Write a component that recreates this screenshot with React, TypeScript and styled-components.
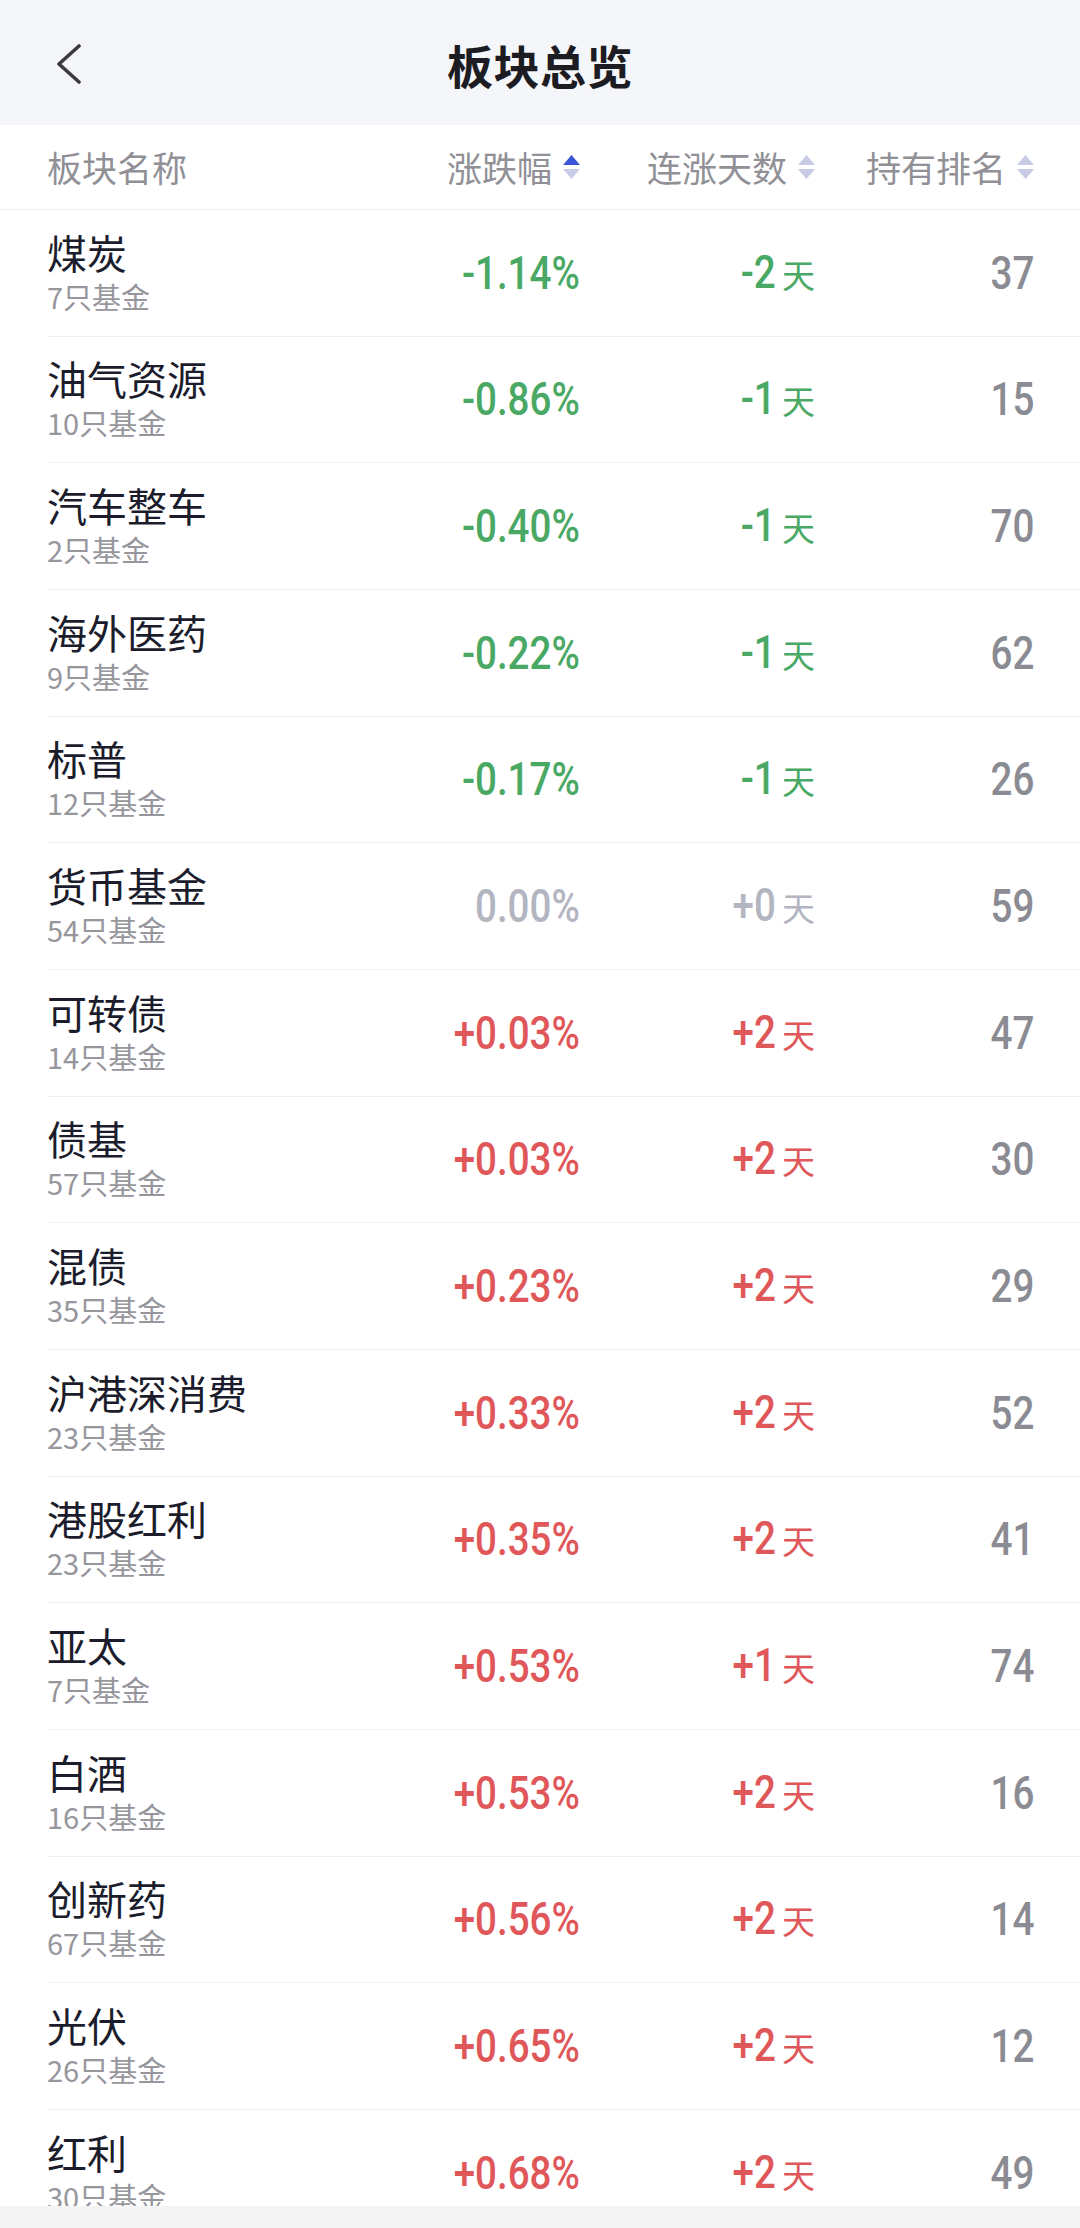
import styled, { createGlobalStyle } from 'styled-components';

type Trend = 'down' | 'flat' | 'up';

interface Sector {
  name: string;
  funds: number;
  change: string;
  streak: string;
  rank: number;
  trend: Trend;
}

const sectors: Sector[] = [
  { name: '煤炭', funds: 7, change: '-1.14%', streak: '-2', rank: 37, trend: 'down' },
  { name: '油气资源', funds: 10, change: '-0.86%', streak: '-1', rank: 15, trend: 'down' },
  { name: '汽车整车', funds: 2, change: '-0.40%', streak: '-1', rank: 70, trend: 'down' },
  { name: '海外医药', funds: 9, change: '-0.22%', streak: '-1', rank: 62, trend: 'down' },
  { name: '标普', funds: 12, change: '-0.17%', streak: '-1', rank: 26, trend: 'down' },
  { name: '货币基金', funds: 54, change: '0.00%', streak: '+0', rank: 59, trend: 'flat' },
  { name: '可转债', funds: 14, change: '+0.03%', streak: '+2', rank: 47, trend: 'up' },
  { name: '债基', funds: 57, change: '+0.03%', streak: '+2', rank: 30, trend: 'up' },
  { name: '混债', funds: 35, change: '+0.23%', streak: '+2', rank: 29, trend: 'up' },
  { name: '沪港深消费', funds: 23, change: '+0.33%', streak: '+2', rank: 52, trend: 'up' },
  { name: '港股红利', funds: 23, change: '+0.35%', streak: '+2', rank: 41, trend: 'up' },
  { name: '亚太', funds: 7, change: '+0.53%', streak: '+1', rank: 74, trend: 'up' },
  { name: '白酒', funds: 16, change: '+0.53%', streak: '+2', rank: 16, trend: 'up' },
  { name: '创新药', funds: 67, change: '+0.56%', streak: '+2', rank: 14, trend: 'up' },
  { name: '光伏', funds: 26, change: '+0.65%', streak: '+2', rank: 12, trend: 'up' },
  { name: '红利', funds: 30, change: '+0.68%', streak: '+2', rank: 49, trend: 'up' },
];

const trendColor: Record<Trend, string> = {
  down: '#4aa865',
  flat: '#b3b5c1',
  up: '#e0575a',
};

const GlobalStyle = createGlobalStyle`
  html, body {
    margin: 0;
    padding: 0;
    background: #ffffff;
  }
  body {
    font-family: 'Noto Sans CJK SC', 'Noto Sans', sans-serif;
  }
`;

const Page = styled.div`
  width: 1080px;
  height: 2228px;
  display: flex;
  flex-direction: column;
  overflow: hidden;
  background: #ffffff;
`;

const TopBar = styled.header`
  height: 125px;
  flex-shrink: 0;
  display: grid;
  grid-template-columns: 1fr auto 1fr;
  align-items: center;
  background: #f5f6fa;
`;

const BackButton = styled.div`
  display: flex;
  align-items: center;
  padding-left: 54px;
  padding-top: 3px;
`;

const Title = styled.h1`
  margin: 0;
  padding-top: 3px;
  font-size: 46px;
  font-weight: 600;
  color: #1c1c22;
  letter-spacing: 0.5px;
`;

const Grid = styled.div`
  display: grid;
  grid-template-columns: 1fr 200px 235px 219px;
  align-items: center;
`;

const HeadRow = styled(Grid)`
  height: 84px;
  flex-shrink: 0;
  padding: 0 46px 0 47px;
  border-bottom: 1px solid #efeff2;
`;

const HeadCell = styled.div<{ $align?: 'left' | 'right' }>`
  display: flex;
  align-items: center;
  justify-content: ${({ $align }) => ($align === 'left' ? 'flex-start' : 'flex-end')};
  font-size: 35px;
  line-height: 50px;
  color: #909096;
  white-space: nowrap;
`;

const SortIcon = styled.svg`
  margin-left: 11px;
  flex-shrink: 0;
`;

const List = styled.div`
  flex: 1;
  overflow: hidden;
  padding-left: 47px;
`;

const Row = styled(Grid)`
  box-sizing: border-box;
  height: 126.67px;
  padding-right: 46px;
  border-bottom: 1px solid #f0f0f3;
`;

const NameCell = styled.div`
  display: flex;
  flex-direction: column;
  padding-bottom: 2px;
`;

const Name = styled.div`
  font-size: 40px;
  line-height: 48px;
  color: #1b1d2c;
  white-space: nowrap;
`;

const Sub = styled.div`
  font-size: 29px;
  line-height: 40px;
  color: #96969c;
  white-space: nowrap;
`;

const Value = styled.div<{ $color: string }>`
  display: flex;
  align-items: baseline;
  justify-content: flex-end;
  color: ${({ $color }) => $color};
  white-space: nowrap;
`;

const Num = styled.span`
  display: inline-block;
  font-family: Roboto, 'Liberation Sans', sans-serif;
  font-size: 47px;
  font-weight: 500;
  line-height: 56px;
  transform: scaleX(0.82);
  transform-origin: right center;
`;

const DayUnit = styled.span`
  font-family: 'Noto Sans CJK SC', sans-serif;
  font-size: 33px;
  line-height: 56px;
  margin-left: 6px;
`;

const BottomBar = styled.div`
  height: 22px;
  flex-shrink: 0;
  background: #f4f4f5;
`;

const Sort = ({ active }: { active?: boolean }) => (
  <SortIcon width="17" height="24" viewBox="0 0 17 24">
    <polygon points="8.5,0 17,10 0,10" fill={active ? '#3b55d6' : '#c8cbe6'} />
    <polygon points="0,14 17,14 8.5,24" fill="#c8cbe6" />
  </SortIcon>
);

export default function App() {
  return (
    <Page>
      <GlobalStyle />
      <TopBar>
        <BackButton>
          <svg width="30" height="40" viewBox="0 0 30 40">
            <polyline
              points="25,2 5,20 25,38"
              fill="none"
              stroke="#3a3a40"
              strokeWidth="3.6"
              strokeLinecap="round"
              strokeLinejoin="round"
            />
          </svg>
        </BackButton>
        <Title>板块总览</Title>
        <div />
      </TopBar>
      <HeadRow>
        <HeadCell $align="left">板块名称</HeadCell>
        <HeadCell>
          涨跌幅
          <Sort active />
        </HeadCell>
        <HeadCell>
          连涨天数
          <Sort />
        </HeadCell>
        <HeadCell>
          持有排名
          <Sort />
        </HeadCell>
      </HeadRow>
      <List>
        {sectors.map((s) => (
          <Row key={s.name}>
            <NameCell>
              <Name>{s.name}</Name>
              <Sub>{s.funds}只基金</Sub>
            </NameCell>
            <Value $color={trendColor[s.trend]}>
              <Num>{s.change}</Num>
            </Value>
            <Value $color={trendColor[s.trend]}>
              <Num>{s.streak}</Num>
              <DayUnit>天</DayUnit>
            </Value>
            <Value $color="#8b8b93">
              <Num>{s.rank}</Num>
            </Value>
          </Row>
        ))}
      </List>
      <BottomBar />
    </Page>
  );
}
